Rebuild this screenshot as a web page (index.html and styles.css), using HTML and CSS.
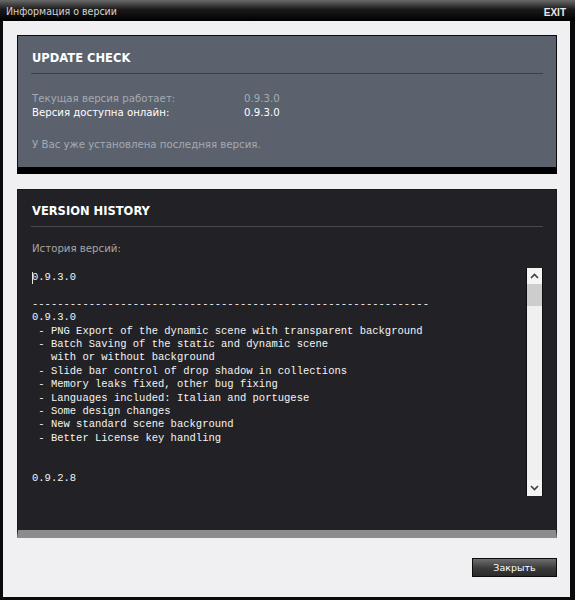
FILE: index.html
```html
<!DOCTYPE html>
<html lang="ru">
<head>
  <meta charset="UTF-8" />
  <title>Информация о версии</title>
  <link rel="stylesheet" href="styles.css">
</head>
<body>
  <div class="window">
    <div class="titlebar">
      <span class="title">Информация о версии</span>
      <span class="exit">EXIT</span>
    </div>
    <div class="content">
      <div class="panel update">
        <h2>UPDATE CHECK</h2>
        <div class="rows">
          <div class="row muted"><span class="key">Текущая версия работает:</span><span>0.9.3.0</span></div>
          <div class="row"><span class="key">Версия доступна онлайн:</span><span>0.9.3.0</span></div>
        </div>
        <div class="status muted">У Вас уже установлена последняя версия.</div>
      </div>

      <div class="panel history">
        <h2>VERSION HISTORY</h2>
        <div class="label">История версий:</div>
        <div class="log">
          <pre class="log-text"><span class="caret"></span>0.9.3.0

---------------------------------------------------------------
0.9.3.0
 - PNG Export of the dynamic scene with transparent background
 - Batch Saving of the static and dynamic scene
   with or without background
 - Slide bar control of drop shadow in collections
 - Memory leaks fixed, other bug fixing
 - Languages included: Italian and portugese
 - Some design changes
 - New standard scene background
 - Better License key handling


0.9.2.8</pre>
          <div class="scrollbar">
            <div class="arrow">
              <svg width="9" height="6" viewBox="0 0 9 6"><path d="M1 5 L4.5 1.5 L8 5" fill="none" stroke="#404040" stroke-width="1.6"/></svg>
            </div>
            <div class="thumb"></div>
            <div class="track"></div>
            <div class="arrow">
              <svg width="9" height="6" viewBox="0 0 9 6"><path d="M1 1 L4.5 4.5 L8 1" fill="none" stroke="#404040" stroke-width="1.6"/></svg>
            </div>
          </div>
        </div>
      </div>

      <div class="actions">
        <button class="btn">Закрыть</button>
      </div>
    </div>
  </div>
</body>
</html>
```

FILE: styles.css
```css
body {
  margin: 0;
  background: #000;
  font-family: 'DejaVu Sans', Verdana, sans-serif;
}
.window {
  width: 567px;
  height: 597px;
  border-left: 3px solid #0a0a0a;
  border-right: 5px solid #0a0a0a;
  border-bottom: 3px solid #0a0a0a;
  display: flex;
  flex-direction: column;
  background: #f0f0f2;
}
.titlebar {
  height: 21px;
  margin-left: -3px;
  margin-right: -5px;
  padding: 0 9px 0 6px;
  display: flex;
  align-items: center;
  justify-content: space-between;
  background: linear-gradient(#6a6a6a, #1a1a1a 45%, #000);
}
.title {
  font-family: 'DejaVu Sans Condensed', 'Liberation Sans', Arial, sans-serif;
  font-size: 10.5px;
  color: #d4d4d4;
  padding-top: 1px;
}
.exit {
  font-family: 'Liberation Sans', Arial, sans-serif;
  font-size: 10px;
  font-weight: bold;
  color: #e8e8e8;
  padding-top: 3px;
}
.content {
  flex: 1;
  padding: 14px 13px 0 14px;
  display: flex;
  flex-direction: column;
}
.panel {
  border: 1px solid #0c0c0c;
  padding: 13px 13px 0;
}
.panel h2 {
  margin: 0 0 7px;
  font-size: 11.5px;
  line-height: 16px;
  font-weight: bold;
  color: #ffffff;
  padding-left: 1px;
  padding-bottom: 7px;
  border-bottom: 1px solid #3b4048;
}
.update {
  background: #5b626d;
  border-bottom: 7px solid #000;
  padding-top: 14px;
  padding-bottom: 15px;
}
.rows {
  margin-top: 18px;
}
.row, .status, .label {
  font-size: 10.2px;
  line-height: 14px;
  color: #ffffff;
  padding-left: 1px;
}
.row {
  display: flex;
}
.row .key {
  width: 212px;
}
.muted {
  color: #a4aab2;
}
.status {
  margin-top: 18px;
}
.history {
  margin-top: 15px;
  background: #222226;
  border-color: #1a1a1c;
  border-bottom: 8px solid #8c8c8c;
  padding-bottom: 34px;
}
.history h2 {
  border-bottom-color: #48484c;
}
.label {
  margin-top: 15px;
  color: #a6a6a6;
}
.log {
  margin-top: 12px;
  height: 228px;
  display: flex;
}
.log-text {
  flex: 1;
  margin: 0;
  padding: 3px 0 0 1px;
  overflow: hidden;
  font-family: 'Liberation Mono', 'Courier New', monospace;
  font-size: 10.5px;
  line-height: 13.4px;
  color: #f4f4f4;
  position: relative;
}
.caret {
  position: absolute;
  left: 1px;
  top: 4px;
  width: 1px;
  height: 12px;
  background: #e6e6e6;
}
.scrollbar {
  width: 15px;
  border: 1px solid #101010;
  border-top: none;
  border-bottom: none;
  background: #f0f0f0;
  display: flex;
  flex-direction: column;
}
.arrow {
  height: 16px;
  display: flex;
  align-items: center;
  justify-content: center;
  background: #f4f4f4;
}
.thumb {
  height: 22px;
  background: #cdcdcd;
}
.track {
  flex: 1;
}
.actions {
  display: flex;
  justify-content: flex-end;
  margin-top: 20px;
}
.btn {
  width: 85px;
  height: 19px;
  padding: 0;
  border: 1px solid #0c0c0c;
  background: linear-gradient(#6e6e6e, #3a3a3a 55%, #2a2a2a);
  color: #ffffff;
  font-family: 'DejaVu Sans', Verdana, sans-serif;
  font-size: 9.5px;
  cursor: pointer;
}
```
